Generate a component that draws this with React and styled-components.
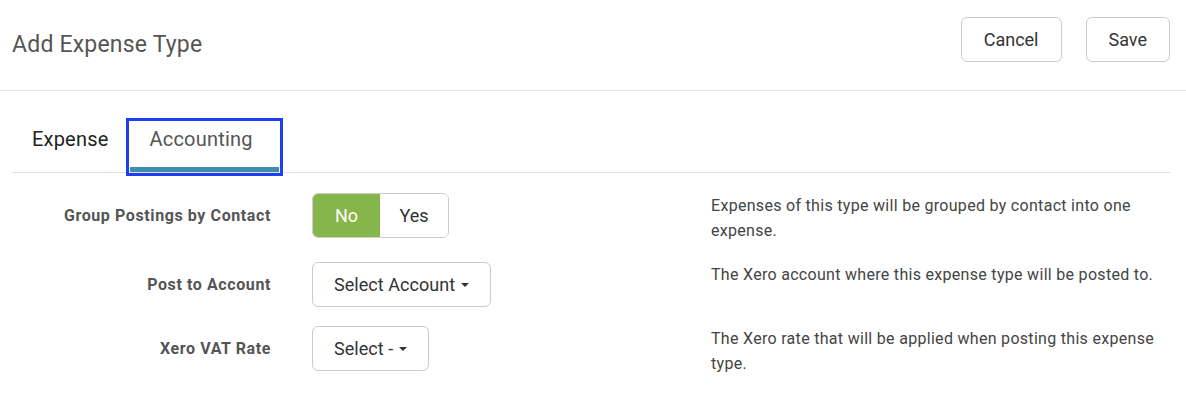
import React, { useState } from 'react';
import styled, { createGlobalStyle } from 'styled-components';

const GlobalStyle = createGlobalStyle`
  body {
    margin: 0;
    background: #fff;
    font-family: Roboto, "Liberation Sans", Arial, sans-serif;
  }
`;

const ROWS = [
  {
    label: 'Group Postings by Contact',
    kind: 'toggle',
    help: 'Expenses of this type will be grouped by contact into one expense.',
  },
  {
    label: 'Post to Account',
    kind: 'select',
    value: 'Select Account',
    help: 'The Xero account where this expense type will be posted to.',
  },
  {
    label: 'Xero VAT Rate',
    kind: 'select',
    value: 'Select -',
    help: 'The Xero rate that will be applied when posting this expense type.',
  },
];

export default function App() {
  const [tab, setTab] = useState('accounting');
  const [grouped, setGrouped] = useState(false);

  return (
    <Page>
      <GlobalStyle />
      <Header>
        <Title>Add Expense Type</Title>
        <Actions>
          <Button>Cancel</Button>
          <Button>Save</Button>
        </Actions>
      </Header>

      <TabList>
        <Tab $active={tab === 'expense'} onClick={() => setTab('expense')}>
          Expense
        </Tab>
        <Tab
          $active={tab === 'accounting'}
          $focused
          onClick={() => setTab('accounting')}
        >
          Accounting
        </Tab>
      </TabList>

      <Form>
        {ROWS.map((row) => (
          <Row key={row.label}>
            <Label>{row.label}</Label>
            <Control>
              {row.kind === 'toggle' ? (
                <Toggle>
                  <ToggleOption $on={!grouped} onClick={() => setGrouped(false)}>
                    No
                  </ToggleOption>
                  <ToggleOption $on={grouped} onClick={() => setGrouped(true)}>
                    Yes
                  </ToggleOption>
                </Toggle>
              ) : (
                <Select>
                  {row.value}
                  <Caret />
                </Select>
              )}
            </Control>
            <Help>{row.help}</Help>
          </Row>
        ))}
      </Form>
    </Page>
  );
}

const Page = styled.div`
  width: 100%;
  color: #333;
`;

const Header = styled.header`
  display: flex;
  justify-content: space-between;
  align-items: flex-start;
  box-sizing: border-box;
  height: 91px;
  padding: 17px 16px 0 12px;
  border-bottom: 1px solid #e6e6e6;
`;

const Title = styled.h1`
  margin: 5px 0 0;
  font-size: 23px;
  font-weight: 400;
  line-height: 45px;
  letter-spacing: 0.2px;
  color: #555;
`;

const Actions = styled.div`
  display: flex;
  gap: 24px;
`;

const Button = styled.button`
  height: 45px;
  padding: 0 22px;
  border: 1px solid #ccc;
  border-radius: 6px;
  background: #fff;
  font-family: inherit;
  font-size: 18px;
  color: #333;
  cursor: pointer;
`;

const TabList = styled.nav`
  display: flex;
  gap: 1px;
  margin: 31px 16px 0 12px;
  border-bottom: 1px solid #e0e0e0;
`;

const Tab = styled.button`
  padding: 5px 26px 16px 20px;
  border: none;
  border-bottom: 5px solid ${(p) => (p.$active ? '#3f8fac' : 'transparent')};
  background: none;
  font-family: inherit;
  font-size: 20px;
  line-height: 24px;
  letter-spacing: 0.2px;
  color: ${(p) => (p.$active ? '#555' : '#222')};
  cursor: pointer;
  outline: ${(p) => (p.$focused ? '3px solid #1f3ff2' : 'none')};
  outline-offset: 1px;

  &:first-child {
    padding-right: 20px;
  }
`;

const Form = styled.div`
  display: flex;
  flex-direction: column;
  gap: 19px;
  padding: 20px 16px 0 12px;
`;

const Row = styled.div`
  display: grid;
  grid-template-columns: 259px 358px 1fr;
  column-gap: 41px;
  align-items: start;
`;

const Label = styled.div`
  display: flex;
  align-items: center;
  justify-content: flex-end;
  height: 45px;
  font-size: 16px;
  font-weight: 700;
  letter-spacing: 0.6px;
  color: #555;
  text-align: right;
`;

const Control = styled.div`
  display: flex;
`;

const Toggle = styled.div`
  display: inline-flex;
  height: 45px;
  box-sizing: border-box;
  border: 1px solid #ccc;
  border-radius: 6px;
  overflow: hidden;
`;

const ToggleOption = styled.button`
  width: ${(p) => (p.$on ? '67px' : '68px')};
  border: none;
  background: ${(p) => (p.$on ? '#86b649' : '#fff')};
  font-family: inherit;
  font-size: 18px;
  color: ${(p) => (p.$on ? '#fff' : '#333')};
  cursor: pointer;
`;

const Select = styled.button`
  display: inline-flex;
  align-items: center;
  height: 45px;
  padding: 0 21px;
  border: 1px solid #ccc;
  border-radius: 6px;
  background: #fff;
  font-family: inherit;
  font-size: 18px;
  letter-spacing: 0.05px;
  color: #333;
  cursor: pointer;
`;

const Caret = styled.span`
  width: 0;
  height: 0;
  margin-left: 6px;
  border-left: 4px solid transparent;
  border-right: 4px solid transparent;
  border-top: 4px solid #333;
`;

const Help = styled.p`
  margin: 0;
  font-size: 16px;
  line-height: 25px;
  letter-spacing: 0.3px;
  color: #444;
`;
